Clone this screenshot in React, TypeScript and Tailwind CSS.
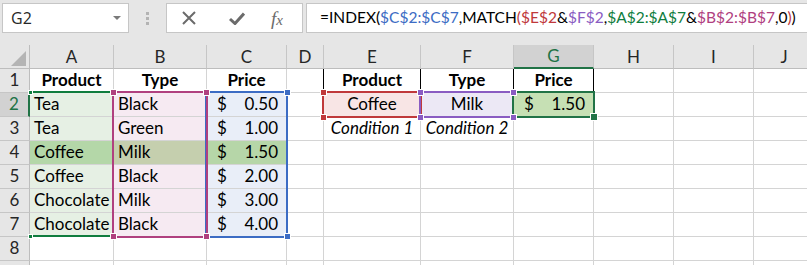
import React from "react";

const F = "font-['Lato','Noto_Sans',sans-serif]";

type CellProps = { className?: string; children?: React.ReactNode };
const Cell = ({ className = "", children }: CellProps) => (
  <div className={`flex items-end border-r border-b border-[#d4d4d4] pb-[3px] px-[4px] overflow-hidden whitespace-nowrap text-[17px] leading-[18px] text-black ${className}`}>
    {children}
  </div>
);

const ColHead = ({ children, sel = false, last = false }: { children?: React.ReactNode; sel?: boolean; last?: boolean }) => (
  <div
    className={`flex items-end justify-center pb-[2px] text-[17px] leading-[18px] ${
      sel ? "bg-[#d2d2d2] text-[#217346] border-b-2 border-b-[#217346]" : "bg-[#e6e6e6] text-[#262626] border-b border-b-[#bdbdbd]"
    } ${last ? "" : "border-r border-r-[#c6c6c6]"}`}
  >
    {children}
  </div>
);

const RowHead = ({ n, sel = false }: { n?: number; sel?: boolean }) => (
  <div
    className={`flex items-end justify-center pb-[3px] text-[17px] leading-[18px] border-b border-b-[#c6c6c6] ${
      sel ? "bg-[#d2d2d2] text-[#217346] border-r-2 border-r-[#217346]" : "bg-[#e6e6e6] text-[#262626] border-r border-r-[#bdbdbd]"
    }`}
  >
    {n}
  </div>
);

const Money = ({ v, className = "" }: { v: string; className?: string }) => (
  <Cell className={`justify-between pl-[10px] pr-[8px] ${className}`}>
    <span>$</span>
    <span>{v}</span>
  </Cell>
);

const Handle = ({ x, y, c, s = 5 }: { x: number; y: number; c: string; s?: number }) => (
  <div
    className="absolute border border-white box-content"
    style={{ left: x - s / 2 - 1, top: y - s / 2 - 1, width: s, height: s, background: c }}
  />
);

export default function App() {
  const A = "bg-[#e6f0e4]";
  const B = "bg-[#f6eaf2]";
  const C = "bg-[#e9eef8]";
  const rows: [string, string, string][] = [
    ["Tea", "Black", "0.50"],
    ["Tea", "Green", "1.00"],
    ["Coffee", "Milk", "1.50"],
    ["Coffee", "Black", "2.00"],
    ["Chocolate", "Milk", "3.00"],
    ["Chocolate", "Black", "4.00"],
  ];
  const empty = (k: string, extra = "") => <Cell key={k} className={extra} />;

  return (
    <div className={`relative w-[807px] h-[265px] overflow-hidden bg-white ${F}`}>
      {/* toolbar */}
      <div className="h-[45px] bg-[#e6e6e6] flex items-start pt-[3px] pl-[2px] overflow-hidden">
        <div className="shrink-0 w-[127px] h-[30px] bg-white border border-[#c6c6c6] flex items-center justify-between pl-[8px] pr-[7px]">
          <span className="text-[16px] text-[#262626] font-['Open_Sans',sans-serif]">G2</span>
          <svg width="8" height="5" viewBox="0 0 8 5"><path d="M0 0h8L4 4z" fill="#7a7a7a" /></svg>
        </div>
        <div className="shrink-0 w-[37px] h-[30px] flex flex-col items-center justify-center gap-[2px]">
          <div className="w-[3px] h-[3px] bg-[#b3b3b3]" />
          <div className="w-[3px] h-[3px] bg-[#b3b3b3]" />
          <div className="w-[3px] h-[3px] bg-[#b3b3b3]" />
        </div>
        <div className="shrink-0 w-[137px] h-[30px] bg-white border border-[#c6c6c6] flex items-center">
          <svg className="ml-[15px]" width="14" height="14" viewBox="0 0 14 14">
            <path d="M1 1L13 13M13 1L1 13" stroke="#6b6b6b" strokeWidth="2" />
          </svg>
          <svg className="ml-[33px]" width="16" height="13" viewBox="0 0 16 13">
            <path d="M1 7l5 4.5L15 1.5" stroke="#6b6b6b" strokeWidth="3" fill="none" />
          </svg>
          <span className="ml-[26px] text-[19px] italic text-[#6b6b6b] font-['Liberation_Serif',serif] leading-none">
            f<span className="text-[15px]">x</span>
          </span>
        </div>
        <div className="ml-[3px] min-w-0 flex-1 h-[30px] bg-white border border-[#c6c6c6] border-r-0 flex items-center pl-[13px] text-[15.5px] whitespace-nowrap text-black overflow-hidden">
          <span>=INDEX(</span>
          <span className="text-[#3c6cc4]">$C$2:$C$7</span>
          <span>,MATCH</span>
          <span className="text-[#c0393b]">(</span>
          <span className="text-[#c0393b]">$E$2</span>
          <span>&amp;</span>
          <span className="text-[#8a5cc2]">$F$2</span>
          <span>,</span>
          <span className="text-[#0f7d3e]">$A$2:$A$7</span>
          <span>&amp;</span>
          <span className="text-[#b0407f]">$B$2:$B$7</span>
          <span>,0</span>
          <span className="text-[#c0393b]">)</span>
          <span>)</span>
        </div>
      </div>

      {/* sheet grid */}
      <div className="grid grid-cols-[30px_84px_93px_80px_37px_97px_93px_80px_80px_80px_60px] grid-rows-[24px_repeat(9,24px)]">
        {/* header */}
        <div className="bg-[#e6e6e6] border-r border-r-[#bdbdbd] border-b border-b-[#bdbdbd] flex items-end justify-end pr-[3px] pb-[2px]">
          <svg width="15" height="15" viewBox="0 0 15 15"><path d="M15 0V15H0z" fill="#b4b4b4" /></svg>
        </div>
        <ColHead>A</ColHead>
        <ColHead>B</ColHead>
        <ColHead>C</ColHead>
        <ColHead>D</ColHead>
        <ColHead>E</ColHead>
        <ColHead>F</ColHead>
        <ColHead sel>G</ColHead>
        <ColHead>H</ColHead>
        <ColHead>I</ColHead>
        <ColHead last>J</ColHead>

        {/* row 1 */}
        <RowHead n={1} />
        <Cell className="justify-center font-bold">Product</Cell>
        <Cell className="justify-center font-bold">Type</Cell>
        <Cell className="justify-center font-bold">Price</Cell>
        <Cell className="border-r-black" />
        <Cell className="justify-center font-bold border-r-black">Product</Cell>
        <Cell className="justify-center font-bold border-r-black">Type</Cell>
        <Cell className="justify-center font-bold border-r-black">Price</Cell>
        {empty("h1")}
        {empty("i1")}
        {empty("j1", "border-r-0")}

        {rows.map((r, i) => {
          const n = i + 2;
          const hl = n === 4;
          return (
            <React.Fragment key={n}>
              <RowHead n={n} sel={n === 2} />
              <Cell className={hl ? "bg-[#b4d7a8]" : A}>{r[0]}</Cell>
              <Cell className={hl ? "bg-[#c5cfae]" : B}>{r[1]}</Cell>
              <Money v={r[2]} className={hl ? "bg-[#b6d6a8]" : C} />
              <Cell />
              {n === 2 ? (
                <>
                  <Cell className="justify-center bg-[#f8e5e5]">Coffee</Cell>
                  <Cell className="justify-center bg-[#ece8f5]">Milk</Cell>
                  <Money v="1.50" className="bg-[#c6e0b4]" />
                </>
              ) : n === 3 ? (
                <>
                  <Cell className="justify-center italic">Condition 1</Cell>
                  <Cell className="justify-center italic">Condition 2</Cell>
                  <Cell />
                </>
              ) : (
                <>
                  <Cell />
                  <Cell />
                  <Cell />
                </>
              )}
              <Cell />
              <Cell />
              <Cell className="border-r-0" />
            </React.Fragment>
          );
        })}

        {[8, 9].map((n) => (
          <React.Fragment key={n}>
            <RowHead n={n === 8 ? 8 : undefined} />
            {Array.from({ length: 10 }).map((_, k) => (
              <Cell key={k} className={k === 9 ? "border-r-0" : ""} />
            ))}
          </React.Fragment>
        ))}
      </div>

      {/* reference outlines (overlay) */}
      <div className="absolute left-[30px] top-[91px] w-[83px] h-[2px] bg-[#0f7d3e]" />
      <div className="absolute left-[30px] top-[235px] w-[83px] h-[2px] bg-[#0f7d3e]" />
      <div className="absolute left-[205px] top-[91px] w-[83px] h-[147px] border-2 border-[#3c6cc4]" />
      <div className="absolute left-[112px] top-[91px] w-[96px] h-[147px] border-2 border-[#b0407f]" />
      <div className="absolute left-[322px] top-[91px] w-[100px] h-[27px] border-2 border-[#c0393b]" />
      <div className="absolute left-[512px] top-[91px] w-[83px] h-[27px] border-2 border-[#217346]" />
      <div className="absolute left-[419px] top-[91px] w-[96px] h-[27px] border-2 border-[#8a5cc2] border-r-0" />

      <Handle x={30} y={92} c="#0f7d3e" s={3} />
      <Handle x={30} y={236} c="#0f7d3e" s={3} />
      <Handle x={113} y={92} c="#b0407f" />
      <Handle x={206} y={92} c="#b0407f" />
      <Handle x={113} y={236} c="#b0407f" />
      <Handle x={206} y={236} c="#b0407f" />
      <Handle x={287} y={92} c="#3c6cc4" />
      <Handle x={287} y={236} c="#3c6cc4" />
      <Handle x={323} y={92} c="#c0393b" />
      <Handle x={323} y={117} c="#c0393b" />
      <Handle x={420} y={92} c="#8a5cc2" />
      <Handle x={420} y={117} c="#8a5cc2" />
      <Handle x={513} y={92} c="#8a5cc2" />
      <Handle x={513} y={117} c="#8a5cc2" />
      <Handle x={594} y={117} c="#217346" s={6} />
    </div>
  );
}
